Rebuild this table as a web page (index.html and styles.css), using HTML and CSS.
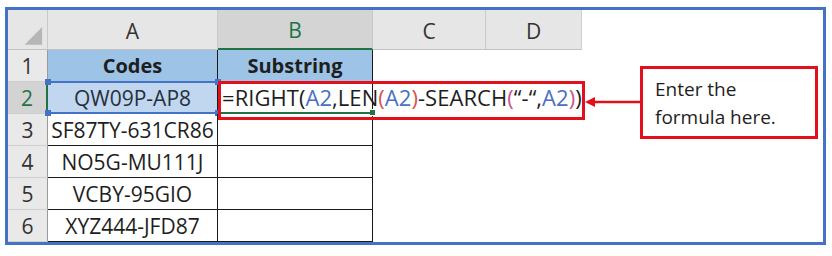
FILE: index.html
```html
<!DOCTYPE html>
<html>
<head>
<meta charset="utf-8">
<link rel="stylesheet" href="styles.css">
</head>
<body>
<div class="frame">
  <div class="sheet">
    <div class="corner"><svg width="40" height="40" viewBox="0 0 40 40"><polygon points="35,17 35,35 17,35" fill="#b6b6b6"/></svg></div>
    <div class="colhead">A</div>
    <div class="colhead active">B</div>
    <div class="colhead">C</div>
    <div class="colhead last">D</div>

    <div class="rownum">1</div>
    <div class="cell a head">Codes</div>
    <div class="cell b head">Substring</div>
    <div class="blank"></div>
    <div class="blank"></div>

    <div class="rownum active">2</div>
    <div class="cell a sel">QW09P-AP8<span class="h tl"></span><span class="h tr"></span><span class="h bl"></span><span class="h br"></span></div>
    <div class="cell b edit"><span class="formula">=RIGHT(<span class="ref">A2</span>,LEN<span class="p1">(</span><span class="ref">A2</span><span class="p1">)</span>-SEARCH<span class="p2">(</span>“-“,<span class="ref">A2</span><span class="p2">)</span>)<span class="caret"></span></span><span class="fill"></span></div>
    <div class="blank"></div>
    <div class="blank"></div>

    <div class="rownum">3</div>
    <div class="cell a">SF87TY-631CR86</div>
    <div class="cell b"></div>
    <div class="blank"></div>
    <div class="blank"></div>

    <div class="rownum">4</div>
    <div class="cell a">NO5G-MU111J</div>
    <div class="cell b"></div>
    <div class="blank"></div>
    <div class="blank"></div>

    <div class="rownum">5</div>
    <div class="cell a">VCBY-95GIO</div>
    <div class="cell b"></div>
    <div class="blank"></div>
    <div class="blank"></div>

    <div class="rownum">6</div>
    <div class="cell a">XYZ444-JFD87</div>
    <div class="cell b"></div>
    <div class="blank"></div>
    <div class="blank"></div>
  </div>

  <div class="redbox"></div>
  <svg class="arrow" width="60" height="14" viewBox="0 0 60 14">
    <line x1="8" y1="7" x2="58" y2="7" stroke="#e3101b" stroke-width="2.5"/>
    <polygon points="0,7 10,2 10,12" fill="#e3101b"/>
  </svg>
  <div class="callout">Enter the<br>formula here.</div>
</div>
</body>
</html>
```

FILE: styles.css
```css
html, body {
  margin: 0;
  padding: 0;
  background: #fff;
}

.frame {
  position: relative;
  box-sizing: border-box;
  margin: 7px 0 0 5px;
  width: 821px;
  height: 238px;
  border: 3px solid #4472c4;
  background: #fff;
  font-family: "Open Sans", "Noto Sans", sans-serif;
  color: #1e1e1e;
}

.sheet {
  display: grid;
  grid-template-columns: 40px 170px 155px 113px 96px;
  grid-template-rows: 40px repeat(6, 32px);
}

.corner {
  background: #e6e6e6;
  border-right: 1px solid #c9c9c9;
  border-bottom: 1px solid #c2c2c2;
  box-sizing: border-box;
  display: flex;
}

.colhead {
  box-sizing: border-box;
  background: #e6e6e6;
  border-right: 1px solid #c9c9c9;
  border-bottom: 1px solid #c2c2c2;
  display: flex;
  align-items: center;
  justify-content: center;
  font-size: 21px;
  color: #333;
  padding-top: 2px;
}

.colhead.last {
  border-right: 1px solid #d0d0d0;
}

.colhead.active {
  background: #d4d4d4;
  color: #217346;
  border-bottom: 2px solid #217346;
}

.rownum {
  box-sizing: border-box;
  background: #e9e9e9;
  border-right: 1px solid #9a9a9a;
  border-bottom: 1px solid #cfcfcf;
  display: flex;
  align-items: center;
  justify-content: center;
  font-size: 21px;
  color: #333;
}

.rownum.active {
  background: #d3d3d3;
  color: #217346;
  border-right: 2px solid #217346;
}

.cell {
  box-sizing: border-box;
  position: relative;
  display: flex;
  align-items: center;
  font-size: 21px;
  color: #1e1e1e;
  border-right: 1px solid #1a1a1a;
  border-bottom: 1px solid #1a1a1a;
  white-space: nowrap;
}

.cell.a {
  justify-content: center;
}

.cell.head {
  background: #9dc3e6;
  font-weight: 700;
  font-size: 20px;
  justify-content: center;
}

.cell.sel {
  background: #c1d7ef;
  color: #26303d;
  border-top: 2px solid #4472c4;
  border-bottom: 2px solid #4472c4;
  margin-top: -1px;
}

.h {
  position: absolute;
  width: 6px;
  height: 6px;
  background: #4472c4;
}
.h.tl { left: -3px; top: -4px; }
.h.tr { right: -4px; top: -4px; }
.h.bl { left: -3px; bottom: -4px; }
.h.br { right: -4px; bottom: -4px; }

.cell.edit {
  overflow: visible;
  padding-left: 4px;
  padding-bottom: 1px;
  z-index: 2;
}

.cell.edit::after {
  content: "";
  position: absolute;
  left: 3px;
  right: 0;
  bottom: -1px;
  height: 2px;
  background: #217346;
}

.fill {
  position: absolute;
  right: -4px;
  bottom: -3px;
  width: 5px;
  height: 5px;
  background: #217346;
  border: 1px solid #fff;
}

.formula {
  display: flex;
  align-items: center;
  font-size: 22px;
  letter-spacing: 0.05px;
}

.ref { color: #4a70c2; }
.p1 { color: #d9534f; }
.p2 { color: #c8568f; }

.caret {
  display: inline-block;
  width: 1px;
  height: 25px;
  margin-left: 1px;
  background: #111;
}

.blank {
  background: transparent;
}

.redbox {
  position: absolute;
  left: 210px;
  top: 71px;
  width: 367px;
  height: 39px;
  box-sizing: border-box;
  border: 3px solid #e3101b;
  z-index: 3;
}

.arrow {
  position: absolute;
  left: 577px;
  top: 85px;
  z-index: 4;
}

.callout {
  position: absolute;
  left: 632px;
  top: 56px;
  width: 178px;
  height: 73px;
  box-sizing: border-box;
  border: 3px solid #e3101b;
  padding: 6px 0 0 12px;
  font-size: 19px;
  line-height: 28px;
  color: #1e1e1e;
  background: #fff;
}
```
